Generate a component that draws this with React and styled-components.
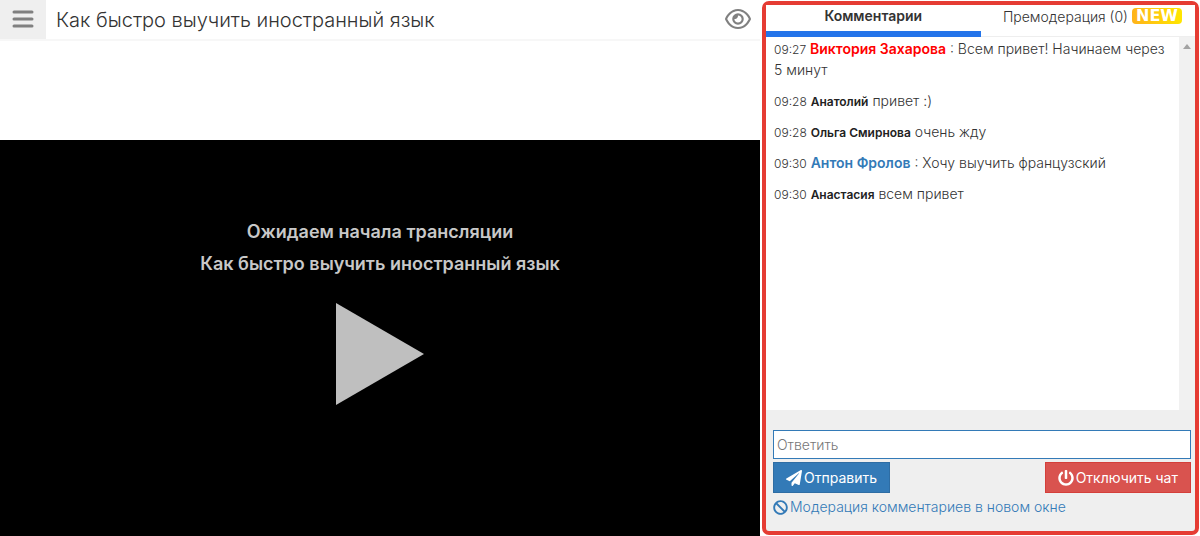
import React from "react";
import styled, { createGlobalStyle } from "styled-components";
import { FaBan, FaPaperPlane, FaPowerOff } from "react-icons/fa";
import { FaRegEye } from "react-icons/fa6";

const GlobalStyle = createGlobalStyle`
  * {
    box-sizing: border-box;
  }

  body {
    margin: 0;
    background: #fff;
    color: #333;
    font-family: Inter, "Noto Sans", sans-serif;
    font-size: 14px;
    font-weight: 300;
  }

  button,
  input {
    font: inherit;
  }
`;

const Page = styled.div`
    display: grid;
    grid-template-columns: 19fr 11fr;
    min-height: 100vh;
  `,
  Main = styled.main`
    display: flex;
    flex-direction: column;
    min-width: 0;
  `,
  Header = styled.header`
    display: flex;
    align-items: center;
    height: 41px;
    padding-right: 9px;
    border-bottom: 2px solid #f7f7f7;
  `,
  MenuButton = styled.button`
    display: flex;
    align-items: center;
    justify-content: center;
    align-self: stretch;
    width: 46px;
    padding: 0 0 2px;
    border: none;
    background: #efefef;
    color: #808080;
    cursor: pointer;
  `,
  Title = styled.h1`
    flex: 1;
    margin: 0;
    padding-left: 10px;
    font-size: 20px;
    font-weight: 300;
    white-space: nowrap;
  `,
  ViewButton = styled.button`
    display: flex;
    padding: 0 0 2px;
    border: none;
    background: none;
    color: #808080;
    font-size: 26px;
    cursor: pointer;
  `,
  Stage = styled.section`
    display: flex;
    flex: 1;
    flex-direction: column;
    align-items: center;
    margin-top: 99px;
    padding-top: 76px;
    background: #000;
    color: #c8c8c8;
  `,
  Waiting = styled.p`
    margin: 0;
    font-size: 18px;
    font-weight: 600;
    line-height: 32px;
    text-align: center;
  `,
  PlayButton = styled.button`
    display: flex;
    margin-top: 23px;
    padding: 0;
    border: none;
    background: none;
    color: #bfbfbf;
    cursor: pointer;
  `,
  Chat = styled.aside`
    display: flex;
    flex-direction: column;
    min-width: 0;
    margin: 1px 1px 1px 2px;
    border: 4px solid #e53c33;
    border-radius: 7px;
    background: #efefef;
  `,
  Tabs = styled.div`
    display: grid;
    grid-template-columns: 1fr 1fr;
    background: #fff;
  `,
  Tab = styled.button`
    display: flex;
    align-items: center;
    justify-content: ${({ $active }) => ($active ? "center" : "flex-end")};
    gap: 4px;
    height: 32px;
    padding: ${({ $active }) => ($active ? "0 0 5px" : "0 13px 9px 0")};
    border: none;
    border-bottom: ${({ $active }) =>
      $active ? "6px solid #2374ea" : "1px solid #eee"};
    background: none;
    color: #333;
    font-weight: ${({ $active }) => ($active ? 600 : 300)};
    white-space: nowrap;
    cursor: pointer;
  `,
  NewBadge = styled.span`
    width: 50px;
    border-radius: 4px;
    background: linear-gradient(90deg, #ffb31a, #ffe600);
    color: #fff;
    font-family: "DejaVu Sans", sans-serif;
    font-size: 16px;
    font-weight: 700;
    line-height: 16px;
    text-align: center;
  `,
  Feed = styled.div`
    display: flex;
    flex: 1;
  `,
  Messages = styled.ul`
    flex: 1;
    margin: 0;
    padding: 1px 8px;
    background: #fff;
    list-style: none;
  `,
  Message = styled.li`
    margin-bottom: 10px;
    line-height: 21px;
  `,
  Time = styled.time`
    font-size: 12px;
    line-height: 1;
  `,
  Author = styled.strong`
    color: ${({ $color }) => $color || "#222"};
    font-size: ${({ $color }) => ($color ? "14px" : "12px")};
    font-weight: 600;
    line-height: 1;
  `,
  Scrollbar = styled.div`
    display: flex;
    justify-content: center;
    width: 16px;
    padding-top: 7px;
    background: #f1f1f1;
    color: #a3a3a3;
  `,
  Reply = styled.form`
    padding: 20px 4px 14px 7px;
  `,
  ReplyInput = styled.input`
    display: block;
    width: 100%;
    height: 29px;
    padding: 0 3px;
    border: 1px solid #337ab7;
    background: #fff;
    color: #333;

    &::placeholder {
      color: #777;
      opacity: 1;
    }
  `,
  Actions = styled.div`
    display: flex;
    justify-content: space-between;
    margin: 3px 0 4px;
  `,
  ActionButton = styled.button`
    display: flex;
    align-items: center;
    gap: 2px;
    height: 31px;
    padding: 0 12px;
    border: 1px solid ${({ $danger }) => ($danger ? "#d43f3a" : "#2e6da4")};
    background: ${({ $danger }) => ($danger ? "#d9534f" : "#337ab7")};
    color: #fff;
    font-weight: 400;
    cursor: pointer;

    svg {
      font-size: 16px;
    }
  `,
  ModerationLink = styled.a`
    display: flex;
    align-items: center;
    gap: 2px;
    color: #337ab7;
    line-height: 20px;
    text-decoration: none;

    svg {
      font-size: 15px;
    }
  `;

const messages = [
  {
    time: "09:27",
    author: "Виктория Захарова",
    color: "#f00",
    text: "Всем привет! Начинаем через 5 минут",
  },
  { time: "09:28", author: "Анатолий", text: "привет :)" },
  { time: "09:28", author: "Ольга Смирнова", text: "очень жду" },
  {
    time: "09:30",
    author: "Антон Фролов",
    color: "#337ab7",
    text: "Хочу выучить французский",
  },
  { time: "09:30", author: "Анастасия", text: "всем привет" },
];

const App = () => {
  return (
    <Page>
      <GlobalStyle />

      <Main>
        <Header>
          <MenuButton type="button" aria-label="Меню">
            <svg width="22" height="20" viewBox="0 0 22 20">
              <path
                d="M2 3h18M2 10h18M2 17h18"
                stroke="currentColor"
                strokeWidth="3"
                strokeLinecap="round"
              />
            </svg>
          </MenuButton>
          <Title>Как быстро выучить иностранный язык</Title>
          <ViewButton type="button" aria-label="Просмотр">
            <FaRegEye />
          </ViewButton>
        </Header>

        <Stage>
          <Waiting>
            Ожидаем начала трансляции
            <br />
            Как быстро выучить иностранный язык
          </Waiting>
          <PlayButton type="button" aria-label="Смотреть">
            <svg width="88" height="102" viewBox="0 0 88 102">
              <path d="M0 0l88 51-88 51z" fill="currentColor" />
            </svg>
          </PlayButton>
        </Stage>
      </Main>

      <Chat>
        <Tabs>
          <Tab type="button" $active>
            Комментарии
          </Tab>
          <Tab type="button">
            Премодерация (0) <NewBadge>NEW</NewBadge>
          </Tab>
        </Tabs>

        <Feed>
          <Messages>
            {messages.map(({ time, author, color, text }) => (
              <Message key={author}>
                <Time>{time}</Time> <Author $color={color}>{author}</Author>
                {color && " :"} {text}
              </Message>
            ))}
          </Messages>
          <Scrollbar>
            <svg width="8" height="5" viewBox="0 0 8 5">
              <path d="M0 5l4-5 4 5z" fill="currentColor" />
            </svg>
          </Scrollbar>
        </Feed>

        <Reply>
          <ReplyInput
            type="text"
            placeholder="Ответить"
            aria-label="Ответить"
          />
          <Actions>
            <ActionButton type="submit">
              <FaPaperPlane />
              Отправить
            </ActionButton>
            <ActionButton type="button" $danger>
              <FaPowerOff />
              Отключить чат
            </ActionButton>
          </Actions>
          <ModerationLink href="#moderation">
            <FaBan />
            Модерация комментариев в новом окне
          </ModerationLink>
        </Reply>
      </Chat>
    </Page>
  );
};

export default App;
